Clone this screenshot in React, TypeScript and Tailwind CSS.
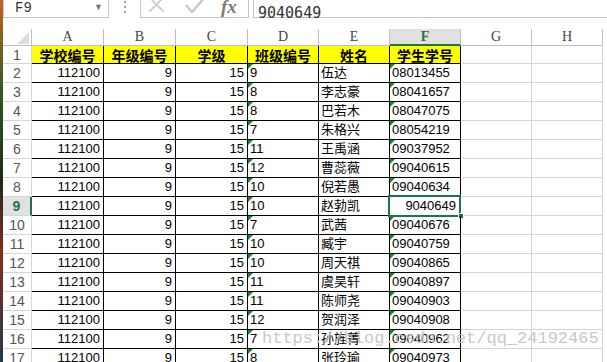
import React from "react";

const rows: [string, string, string][] = [
  ["9", "伍达", "08013455"],
  ["8", "李志豪", "08041657"],
  ["8", "巴若木", "08047075"],
  ["7", "朱格兴", "08054219"],
  ["11", "王禹涵", "09037952"],
  ["12", "曹蕊薇", "09040615"],
  ["10", "倪若愚", "09040634"],
  ["10", "赵勃凯", "9040649"],
  ["7", "武茜", "09040676"],
  ["10", "臧宇", "09040759"],
  ["10", "周天祺", "09040865"],
  ["11", "虞昊轩", "09040897"],
  ["11", "陈师尧", "09040903"],
  ["12", "贺润泽", "09040908"],
  ["7", "孙旌菁", "09040962"],
  ["8", "张玲瑜", "09040973"],
];

const cols = ["A", "B", "C", "D", "E", "F", "G", "H"];
const widths = ["w-[72px]", "w-[72px]", "w-[72px]", "w-[71px]", "w-[71px]", "w-[71px]", "w-[71px]", "w-[71px]"];
const titles = ["学校编号", "年级编号", "学级", "班级编号", "姓名", "学生学号"];

const cellFont = "font-['Liberation_Sans','Noto_Sans_CJK_SC',sans-serif] text-[13px]";

const Flag = () => (
  <span className="absolute left-0 top-0 h-0 w-0 border-t-[5px] border-r-[5px] border-t-[#0f8a2c] border-r-transparent" />
);

const FormulaBar = () => (
  <div className="flex h-[18px] text-[#333]">
    <div className="flex w-[106px] items-start justify-between border-b border-l border-r border-[#c6c6c6] pl-[11px] pr-[5px]">
      <span className="font-['Liberation_Mono',monospace] text-[14px] leading-[16px]">F9</span>
      <span className="mt-[1px] text-[9px] leading-[12px] text-[#777]">▼</span>
    </div>
    <div className="flex w-[31px] justify-center pt-[1px]">
      <div className="flex flex-col gap-[3px]">
        <span className="h-[2px] w-[2px] bg-[#a0a0a0]" />
        <span className="h-[2px] w-[2px] bg-[#a0a0a0]" />
        <span className="h-[2px] w-[2px] bg-[#a0a0a0]" />
      </div>
    </div>
    <div className="flex w-[109px] items-start border-b border-l border-r border-[#c6c6c6]">
      <svg width="26" height="17" viewBox="0 0 26 17" className="ml-[6px]">
        <path d="M2 -3 L17 12 M17 -3 L2 12" stroke="#c8c8c8" strokeWidth="1.6" fill="none" />
      </svg>
      <svg width="26" height="17" viewBox="0 0 26 17" className="ml-[10px]">
        <path d="M3 5 L9 12 L22 -3" stroke="#c8c8c8" strokeWidth="2.4" fill="none" />
      </svg>
      <span className="ml-[12px] font-['Liberation_Serif',serif] text-[19px] font-bold italic leading-[14px] text-[#7b7b7b]">
        fx
      </span>
    </div>
    <div className="w-[4px]" />
    <div className="flex-1 border-b border-l border-[#c6c6c6] pl-[4px]">
      <span className="font-['DejaVu_Sans_Mono',monospace] text-[15px] leading-[16px]">9040649</span>
    </div>
  </div>
);

const HeaderRow = () => (
  <div className="flex h-[17px]">
    <div className="relative w-[29px] border-b border-r border-[#c0c0c0]">
      <svg width="12" height="12" viewBox="0 0 12 12" className="absolute bottom-[1px] right-[2px]">
        <path d="M12 0 L12 12 L0 12 Z" fill="#dcdcdc" />
      </svg>
    </div>
    {cols.map((c, i) => (
      <div
        key={c}
        className={`${widths[i]} flex items-center justify-center border-r font-['Liberation_Serif',serif] text-[14px] leading-[16px] ${
          c === "F"
            ? "border-b-2 border-b-[#217346] border-r-[#c0c0c0] bg-[#e1e1e1] font-bold text-[#217346]"
            : "border-b border-[#c0c0c0] text-[#444]"
        }`}
      >
        {c}
      </div>
    ))}
  </div>
);

const TitleRow = () => (
  <div className="flex h-[18px]">
    <div className="flex w-[29px] items-center justify-center border-b border-r border-[#d5d5d5] font-['Liberation_Sans',sans-serif] text-[14px] leading-[16px] text-[#555]">
      1
    </div>
    {cols.map((c, i) =>
      i < 6 ? (
        <div
          key={c}
          className={`${widths[i]} flex items-center justify-center border-b border-r border-black bg-[#ffff00] font-['Noto_Sans_CJK_SC',sans-serif] text-[14px] font-bold leading-[16px]`}
        >
          {titles[i]}
        </div>
      ) : (
        <div key={c} className={`${widths[i]} border-b border-r border-[#d4d4d4]`} />
      ),
    )}
  </div>
);

const DataRow = ({ n, row }: { n: number; row: [string, string, string] }) => {
  const selected = n === 9;
  return (
    <div className="flex h-[19px]">
      <div
        className={`flex w-[29px] items-center justify-center border-b font-['Liberation_Sans',sans-serif] text-[14px] leading-[16px] ${
          selected
            ? "border-r-2 border-r-[#217346] border-b-[#d5d5d5] bg-[#e1e1e1] font-bold text-[#217346]"
            : "border-r border-[#d5d5d5] text-[#555]"
        }`}
      >
        {n}
      </div>
      <div className={`w-[72px] border-b border-r border-black pr-[3px] text-right leading-[18px] ${cellFont}`}>112100</div>
      <div className={`w-[72px] border-b border-r border-black pr-[3px] text-right leading-[18px] ${cellFont}`}>9</div>
      <div className={`w-[72px] border-b border-r border-black pr-[3px] text-right leading-[18px] ${cellFont}`}>15</div>
      <div className={`relative w-[71px] border-b border-r border-black pl-[2px] leading-[18px] ${cellFont}`}>
        <Flag />
        {row[0]}
      </div>
      <div className={`w-[71px] border-b border-r border-black pl-[2px] leading-[18px] ${cellFont}`}>{row[1]}</div>
      <div
        className={`relative w-[71px] border-b border-r border-black leading-[18px] ${cellFont} ${
          selected ? "pr-[4px] text-right" : "pl-[2px]"
        }`}
      >
        {selected ? (
          <>
            <span className="absolute -left-[2px] -top-[2px] bottom-[-2px] right-[-1px] border-2 border-[#217346]" />
            <span className="absolute bottom-[-4px] right-[-4px] h-[6px] w-[6px] border border-white bg-[#217346]" />
          </>
        ) : (
          <Flag />
        )}
        {row[2]}
      </div>
      <div className="w-[71px] border-b border-r border-[#d4d4d4]" />
      <div className="w-[71px] border-b border-r border-[#d4d4d4]" />
    </div>
  );
};

export default function App() {
  return (
    <div className="relative flex h-[362px] w-[607px] overflow-hidden bg-white">
      <div className="w-[3px] bg-[linear-gradient(#c8641e,#2f5a22_25%,#1d2b1c_50%,#8a2a1e_70%,#1f3a4a)]" />
      <div className="flex-1">
        <FormulaBar />
        <div className="h-[11px]" />
        <HeaderRow />
        <TitleRow />
        {rows.map((r, i) => (
          <DataRow key={i} n={i + 2} row={r} />
        ))}
      </div>
      <div className="pointer-events-none absolute left-[262px] top-[329px] font-['Liberation_Mono',monospace] text-[17px] leading-[20px] text-[#c4c4c4] opacity-90">
        https://blog.csdn.net/qq_24192465
      </div>
    </div>
  );
}
